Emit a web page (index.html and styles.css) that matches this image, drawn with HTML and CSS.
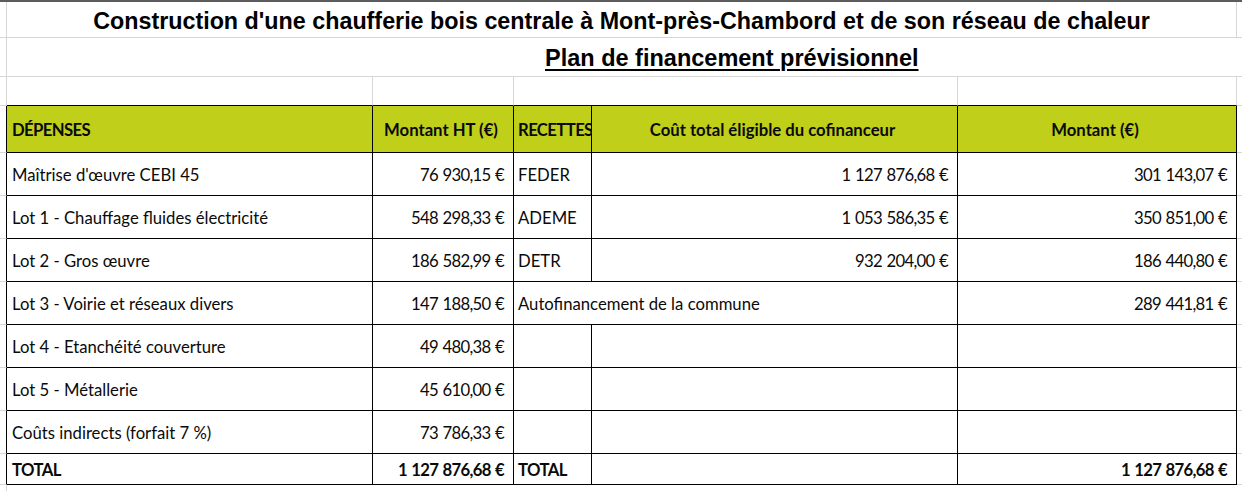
FILE: index.html
```html
<!DOCTYPE html>
<html lang="fr">
<head>
<meta charset="utf-8">
<title>Plan de financement prévisionnel</title>
<link rel="stylesheet" href="styles.css">
</head>
<body>
<div class="sheet">
  <!-- row 1 : title -->
  <div class="stub lite"></div>
  <div class="title span5">Construction d'une chaufferie bois centrale à Mont-près-Chambord et de son réseau de chaleur</div>
  <div class="stub-r"></div>

  <!-- row 2 : subtitle -->
  <div class="stub lite"></div>
  <div class="subtitle span5"><span>Plan de financement prévisionnel</span></div>
  <div class="stub-r"></div>

  <!-- row 3 : empty -->
  <div class="stub lite"></div>
  <div class="blank"></div>
  <div class="blank"></div>
  <div class="blank span2"></div>
  <div class="blank"></div>
  <div class="stub-r"></div>

  <!-- header -->
  <div class="stub"></div>
  <div class="cell hd caps">DÉPENSES</div>
  <div class="cell hd center">Montant HT (€)</div>
  <div class="cell hd narrow caps">RECETTES</div>
  <div class="cell hd center">Coût total éligible du cofinanceur</div>
  <div class="cell hd center">Montant (€)</div>
  <div class="stub-r"></div>

  <!-- data rows -->
  <div class="stub"></div>
  <div class="cell">Maîtrise d'œuvre CEBI 45</div>
  <div class="cell num">76 930,15 €</div>
  <div class="cell narrow">FEDER</div>
  <div class="cell num">1 127 876,68 €</div>
  <div class="cell num">301 143,07 €</div>
  <div class="stub-r"></div>

  <div class="stub"></div>
  <div class="cell">Lot 1 - Chauffage fluides électricité</div>
  <div class="cell num">548 298,33 €</div>
  <div class="cell narrow">ADEME</div>
  <div class="cell num">1 053 586,35 €</div>
  <div class="cell num">350 851,00 €</div>
  <div class="stub-r"></div>

  <div class="stub"></div>
  <div class="cell">Lot 2 - Gros œuvre</div>
  <div class="cell num">186 582,99 €</div>
  <div class="cell narrow">DETR</div>
  <div class="cell num">932 204,00 €</div>
  <div class="cell num">186 440,80 €</div>
  <div class="stub-r"></div>

  <div class="stub"></div>
  <div class="cell">Lot 3 - Voirie et réseaux divers</div>
  <div class="cell num">147 188,50 €</div>
  <div class="cell narrow span2">Autofinancement de la commune</div>
  <div class="cell num">289 441,81 €</div>
  <div class="stub-r"></div>

  <div class="stub"></div>
  <div class="cell">Lot 4 - Etanchéité couverture</div>
  <div class="cell num">49 480,38 €</div>
  <div class="cell"></div>
  <div class="cell"></div>
  <div class="cell"></div>
  <div class="stub-r"></div>

  <div class="stub"></div>
  <div class="cell">Lot 5 - Métallerie</div>
  <div class="cell num">45 610,00 €</div>
  <div class="cell"></div>
  <div class="cell"></div>
  <div class="cell"></div>
  <div class="stub-r"></div>

  <div class="stub"></div>
  <div class="cell">Coûts indirects (forfait 7 %)</div>
  <div class="cell num">73 786,33 €</div>
  <div class="cell"></div>
  <div class="cell"></div>
  <div class="cell"></div>
  <div class="stub-r"></div>

  <!-- total -->
  <div class="stub"></div>
  <div class="cell bold caps">TOTAL</div>
  <div class="cell num bold">1 127 876,68 €</div>
  <div class="cell narrow bold caps">TOTAL</div>
  <div class="cell"></div>
  <div class="cell num bold">1 127 876,68 €</div>
  <div class="stub-r"></div>

  <!-- tail -->
  <div class="stub tail"></div>
  <div class="tailfill"></div>
</div>
</body>
</html>
```

FILE: styles.css
```css
html, body {
  margin: 0;
  padding: 0;
  background: #ffffff;
}

.sheet {
  width: 1242px;
  height: 491px;
  box-sizing: border-box;
  border-top: 2px solid #5c5c5c;
  display: grid;
  grid-template-columns: 7px 366px 141px 78px 366px 279px 5px;
  grid-template-rows: 36px 39px 29px 47px repeat(7, 43px) 31px 6px;
  font-family: Lato, "Open Sans", sans-serif;
  font-size: 16.7px;
  color: #0a0a0a;
  overflow: hidden;
}

.sheet > div {
  box-sizing: border-box;
  display: flex;
  align-items: center;
  white-space: nowrap;
  min-width: 0;
}

.span5 { grid-column: span 5; }
.span2 { grid-column: span 2; }

/* left stub column (row headers edge) */
.stub {
  border-right: 1px solid #000;
  border-bottom: 1px solid #d6d6d6;
}
.stub.lite { border-right-color: #d6d6d6; }
.stub.tail { border-right-color: #d6d6d6; border-bottom: none; }

.stub-r {
  border-bottom: 1px solid #d6d6d6;
}

.tailfill { grid-column: span 6; }

/* titles */
.title {
  justify-content: center;
  font-family: "Liberation Sans", Arial, sans-serif;
  font-weight: bold;
  font-size: 23.3px;
  color: #000;
  border-right: 1px solid #d6d6d6;
  border-bottom: 1px solid #d6d6d6;
  padding-top: 3px;
}

.subtitle {
  padding-left: 538px;
  font-family: "Liberation Sans", Arial, sans-serif;
  font-weight: bold;
  font-size: 23.5px;
  color: #000;
  border-bottom: 1px solid #d6d6d6;
  padding-top: 2px;
}
.subtitle span {
  text-decoration: underline;
  text-underline-offset: 3px;
  text-decoration-thickness: 2px;
}

/* empty row above the table */
.blank {
  border-right: 1px solid #d6d6d6;
  border-bottom: 1px solid #000;
}

/* table cells */
.cell {
  border-right: 1px solid #000;
  border-bottom: 1px solid #000;
  padding: 2px 9px 0 5px;
  overflow: visible;
}
.cell.narrow { padding-left: 4px; }
.cell.num { justify-content: flex-end; letter-spacing: -0.7px; word-spacing: 1px; }
.cell.center { justify-content: center; }
.cell.caps { letter-spacing: -0.6px; }

.hd {
  background: #bfcf1a;
  font-weight: bold;
}

.bold { font-weight: bold; }
```
